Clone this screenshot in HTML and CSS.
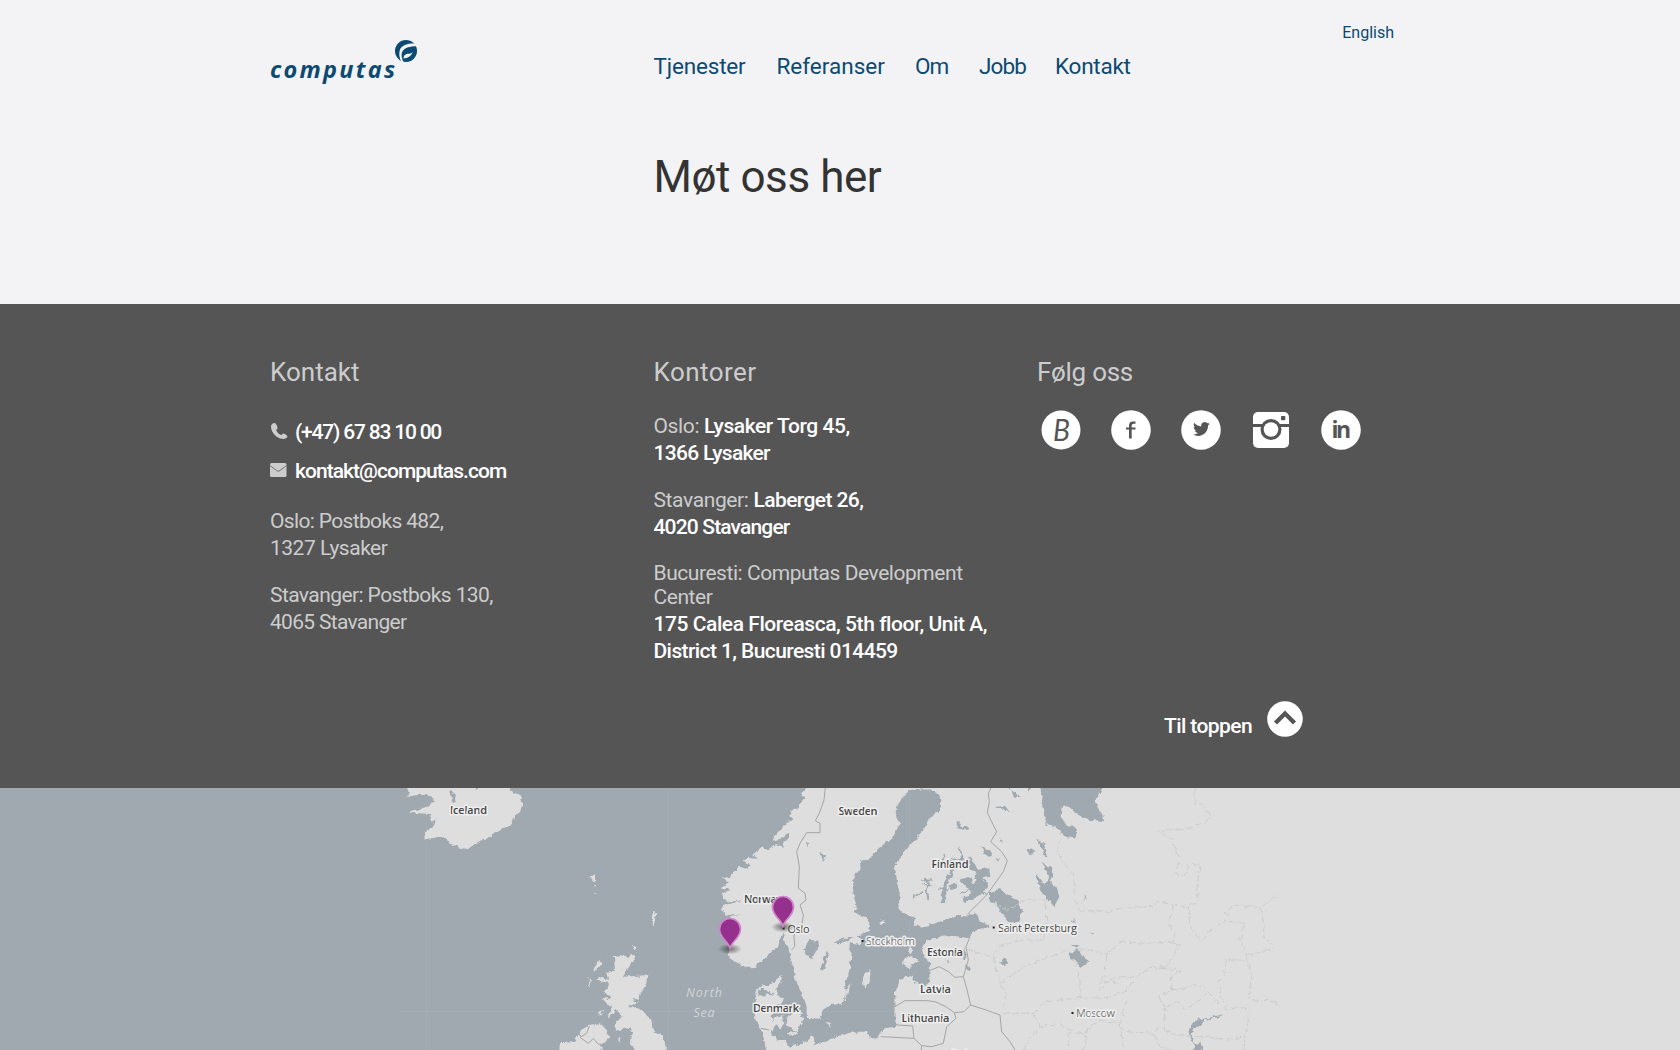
FILE: index.html
```html
<!DOCTYPE html>
<html lang="no">
<head>
<meta charset="utf-8">
<title>Møt oss her - Computas</title>
<link rel="stylesheet" href="styles.css">
</head>
<body>
<header class="header">
  <div class="wrap header-grid">
    <a class="logo" href="#" aria-label="Computas">
      <svg width="150" height="50" viewBox="0 0 150 50">
        <text class="logo-text" x="0" y="40.5" textLength="125">computas</text>
        <circle cx="136" cy="14" r="11" fill="#0b4a73"/>
        <path d="M147.500 7C139 5.500 131.500 8 129.800 13C128.800 17 129.200 21 131.500 25L133.500 25C131 20 131 15.500 133.500 13C137 9.500 142 9.500 148 9Z" fill="#f3f3f5"/>
        <path d="M133.500 21.500C133.500 18 136 16.500 139 16.700C140.500 16.800 141.500 16 142.500 15C142 18.500 138 21.500 133.500 21.500Z" fill="#f3f3f5"/>
      </svg>
    </a>
    <div class="main-head">
      <nav class="nav">
        <a class="n1" href="#">Tjenester</a><a class="n2" href="#">Referanser</a><a class="n3" href="#">Om</a><a class="n4" href="#">Jobb</a><a class="n5" href="#">Kontakt</a>
      </nav>
      <h1 class="title">Møt oss her</h1>
    </div>
    <a class="lang" href="#">English</a>
  </div>
</header>
<footer class="footer">
  <div class="wrap cols">
    <section>
      <h2>Kontakt</h2>
      <p class="line phone"><svg class="ico" width="18" height="18" viewBox="0 0 18 18"><path d="M4.500 1C3 1 1 2.500 1 4.500C1 11 7.500 17 13.500 17C15.500 17 17 16 17.500 14.500C17.500 13.500 15 12 13.500 11.500C12.500 11.500 12 13 11 13C9 12.500 7 10.500 6.300 8.300C6.300 7.500 7.500 7 7.500 6C7.500 4.500 6 1 4.500 1Z"/></svg><a href="#">(+47) 67 83 10 00</a></p>
      <p class="line mail"><svg class="ico" width="18" height="18" viewBox="0 0 18 18"><rect y="2" width="16.500" height="14" rx="1.500"/><path d="M0 4.500L6.500 9.500Q8.200 11 10 9.500L16.500 4.500" fill="none" stroke="#666" stroke-width=".9"/></svg><a href="#">kontakt@computas.com</a></p>
      <p class="addr"><span class="a1">Oslo: Postboks 482,</span><br><span class="a2">1327 Lysaker</span></p>
      <p class="addr"><span class="a3">Stavanger: Postboks 130,</span><br><span class="a4">4065 Stavanger</span></p>
    </section>
    <section class="offices">
      <h2>Kontorer</h2>
      <p class="addr"><span class="b0">Oslo: </span><a class="b1" href="#">Lysaker Torg 45,</a><br><a class="b5" href="#">1366 Lysaker</a></p>
      <p class="addr"><span class="b0">Stavanger: </span><a class="b2" href="#">Laberget 26,</a><br><a class="b6" href="#">4020 Stavanger</a></p>
      <p class="addr center-name">Bucuresti: Computas Development<br>Center</p>
      <p class="addr street"><a class="b3" href="#">175 Calea Floreasca, 5th floor, Unit A,</a><br><a class="b4" href="#">District 1, Bucuresti 014459</a></p>
    </section>
    <section class="follow">
      <h2>Følg oss</h2>
      <div class="social">
        <svg width="40" height="40" viewBox="0 0 40 40"><circle cx="20" cy="20" r="19.500"/><text class="glyph blog" x="12" y="31" textLength="17" lengthAdjust="spacingAndGlyphs">B</text></svg>
        <svg width="40" height="40" viewBox="0 0 40 40"><circle cx="20" cy="20" r="19.800"/><path class="cut" d="M18 28.500V19.500H15V17.500H18V15.500Q18 11.500 22 11.500H24.500V13.700H22.500Q20.700 13.700 20.700 15.500V17.500H24.500V19.500H20.700V28.500Z"/></svg>
        <svg width="40" height="40" viewBox="0 0 40 40"><circle cx="20" cy="20" r="19.800"/><path class="cut" transform="translate(12 12) scale(.7)" d="M24 2.600c-.9.400-1.800.7-2.800.8 1-.6 1.800-1.600 2.200-2.700-1 .6-2 1-3.100 1.200a4.900 4.900 0 0 0-8.400 4.500C7.700 6.200 4.100 4.200 1.700 1.200.4 3.400 1 6.300 3.200 7.800c-.8 0-1.600-.2-2.200-.6-.1 2.300 1.600 4.400 3.900 4.900-.7.200-1.500.2-2.200.1.600 2 2.400 3.400 4.600 3.400A9.900 9.900 0 0 1 0 17.600c9.100 5.800 21.700-.1 21.500-12.500 1-.7 1.800-1.600 2.500-2.500z"/></svg>
        <svg width="40" height="40" viewBox="0 0 40 40"><rect x="2" y="2" width="36" height="36" rx="5"/><path class="cut" d="M2 14H38V17H2z"/><circle class="cut" cx="20" cy="19.500" r="10.500"/><circle cx="20" cy="19.500" r="7.300"/><rect class="cut" x="30" y="6" width="4.300" height="4.300" rx=".8"/></svg>
        <svg width="40" height="40" viewBox="0 0 40 40"><circle cx="20" cy="20" r="19.800"/><text class="glyph in" x="10.500" y="27.500" textLength="19.500">in</text></svg>
      </div>
    </section>
  </div>
  <div class="wrap top-row">
    <a class="to-top" href="#"><span>Til toppen</span><svg width="36" height="36" viewBox="0 0 36 36"><circle cx="18" cy="18" r="17.800" fill="#fff"/><path d="M8.500 22L18 12.500L27.500 22" fill="none" stroke="#555" stroke-width="4.400"/></svg></a>
  </div>
</footer>
<div class="map">
<svg width="1680" height="262" viewBox="0 788 1680 262">
  <defs>
    <filter id="coast" filterUnits="userSpaceOnUse" x="-1950" y="0" width="5100" height="860" color-interpolation-filters="sRGB">
      <feTurbulence type="fractalNoise" baseFrequency=".07" numOctaves="3" seed="4"/>
      <feDisplacementMap in="SourceGraphic" scale="16" xChannelSelector="R" yChannelSelector="G"/>
    </filter>
    <radialGradient id="shade"><stop offset="0" stop-opacity=".5"/><stop offset="1" stop-opacity="0"/></radialGradient>
    <g id="pin"><ellipse cx="0" cy="1" rx="12" ry="5.500" fill="url(#shade)"/><path d="M0 0C-2-7-10.500-10-10.500-19A10.500 10.500 0 0 1 10.500-19C10.500-10 2-7 0 0Z" fill="#95308d" stroke="#cf86ca" stroke-width="1.700"/></g>
  </defs>
  <rect y="788" width="1680" height="262" fill="#9fa9af"/>
  <g transform="translate(640 780) scale(.333333)">
    <g class="land" filter="url(#coast)">
      <path d="M492 10L492 30 480 50 494 54 478 70 476 84 455 92 448 108 462 118 445 125 435 135 420 150 403 168 398 182 420 178 445 160 450 172 428 190 434 204 405 195 388 208 370 202 340 224 350 236 325 233 310 242 332 256 318 266 295 258 288 272 268 290 248 296 270 304 245 322 268 330 243 342 250 360 272 364 306 362 270 372 248 378 246 396 268 408 300 402 250 420 244 440 262 455 240 465 256 480 270 505 264 520 275 540 300 555 320 563 345 560 375 535 400 510 415 500 420 475 430 455 434 490 445 500 450 530 460 560 465 590 475 620 490 650 500 680 500 710 510 718 540 715 548 690 570 675 605 672 618 640 615 610 625 585 630 560 635 520 628 505 630 490 660 495 672 480 650 470 665 460 685 455 692 430 680 415 660 405 640 395 650 380 642 350 637 310 645 280 662 270 660 243 690 235 705 215 740 185 760 170 780 130 765 105 770 85 780 60 800 40 808 30 870 28 895 40 904 60 900 95 885 97 870 115 850 150 820 185 790 218 775 240 765 262 772 310 780 350 773 385 795 402 825 415 822 432 840 442 890 428 950 408 980 407 1010 400 1020 425 1055 437 1020 450 995 455 990 475 920 465 865 480 845 500 850 530 870 550 868 600 855 620 830 610 810 585 780 600 765 640 767 690 765 740 735 745 725 760 710 775 690 775 680 755 640 755 590 770 545 790 520 795 490 812 480 860 3150 860V10Z"/>
      <path d="M425 585L424 610 405 625 412 645 432 655 425 670 410 675 400 690 395 710 405 735 395 760 410 780 435 780 450 800 485 790 500 785 510 765 525 770 520 800 480 860H360L380 815 372 780 365 750 345 720 348 680 347 650 352 625 370 615 390 615Z"/>
      <path d="M402 712L425 705 433 728 422 745 402 735ZM438 718L455 700 485 695 488 725 475 735 478 755 458 748 440 735ZM440 760L465 755 475 762 450 770ZM558 725L572 730 572 742 560 735ZM675 578L695 570 692 600 672 625 668 600ZM632 608L625 645 612 665 620 630ZM790 538L820 526 835 540 805 565 790 555ZM800 508L815 503 824 515 808 520ZM718 430L732 418 736 430 722 435Z"/>
      <path d="M-705 10L-690 38 -703 50 -640 42 -615 62 -640 80 -690 98 -630 102 -625 125 -610 118 -620 140 -648 160 -646 178 -595 170 -570 190 -540 204 -515 207 -495 190 -455 175 -415 145 -385 135 -378 112 -360 95 -353 70 -358 45 -385 35 -400 10Z"/>
      <path d="M-78 530L-16 525 -20 545 -45 575 -50 590 25 585 22 610 0 640 -5 655 -25 660 -5 668 -35 682 -10 682 15 700 35 725 38 750 68 770 80 800 86 860 15 860 10 830 -30 790 -25 742 -75 752 -78 735 -55 710 -70 690 -98 715 -85 680 -115 660 -88 650 -107 638 -92 610 -130 600 -127 590 -92 600 -102 575 -75 572Z"/>
      <path d="M-240 860L-238 790 -195 785 -178 750 -150 735 -120 730 -100 750 -93 770 -115 795 -118 860ZM-140 570L-118 535 -117 555 -138 578ZM-154 590L-147 598 -152 622ZM-123 695L-110 690 -120 705ZM-63 780L-55 770 -60 790ZM-25 495L-10 505 -20 512ZM35 410L42 395 48 400 44 418 42 440 32 422ZM-150 292L-138 286 -130 300 -138 304ZM-140 315L-132 314 -132 320ZM-138 332L-130 342-137 340Z"/>
    </g>
    <g class="water" filter="url(#coast)">
      <path d="M510 480L535 482 537 500 515 535 495 522 490 508ZM560 515L566 525 550 575 540 570ZM538 215L558 225 550 245ZM500 185L508 190 505 200ZM580 488L620 470 645 473 620 484 600 490ZM-567 25L-557 40 -550 50 -560 70 -570 45ZM-495 20L-497 38 -485 25ZM360 625L382 632 405 645 380 640 372 650 355 645Z"/>
      <path d="M1195 10L1208 50 1205 70 1220 135 1245 140 1275 170 1305 175 1312 150 1300 138 1278 135 1262 108 1265 85 1280 75 1310 100 1325 110 1355 120 1390 122 1385 100 1365 60 1390 20ZM1100 20L1120 35 1140 50 1125 50ZM1065 82L1092 78 1112 95 1088 86ZM950 125L962 128 965 140 985 142 985 150 950 148ZM1160 20L1175 20 1165 38Z"/>
      <path d="M1050 340L1080 325 1100 345 1130 360 1145 395 1135 425 1110 428 1085 400 1070 370 1050 362ZM1205 250L1235 262 1240 280 1230 305 1250 325 1258 350 1242 380 1225 360 1200 330 1195 310 1190 280 1215 315 1225 290 1215 265ZM1190 180L1212 188 1215 205 1225 232 1215 230 1205 200ZM1160 210L1180 208 1182 220 1165 222ZM1075 175L1088 178 1085 188ZM1285 425L1300 418 1310 428ZM1332 342L1338 350 1335 362ZM1346 453L1365 465 1355 462ZM1285 515L1298 520 1310 508 1322 514 1328 528 1345 540 1338 553 1322 562 1308 545 1298 540ZM1292 494L1318 496 1310 504ZM1080 548L1095 535 1105 550 1090 556ZM970 500L978 520 975 540 970 540ZM978 555L992 565 985 572ZM920 540L928 545 925 555Z"/>
      <path d="M1020 198L1052 215 1052 235 1035 222ZM985 230L1005 250 1015 270 1045 262 1048 290 1025 295 1048 315 1030 340 995 360 970 365 968 348 995 345 985 325 960 298 990 290 1000 310 1010 300 1005 275 990 268ZM1070 235L1080 235 1072 248ZM905 370L905 320 920 295 935 270 955 250 940 275 920 315 918 368ZM925 320L945 308 952 325 935 330Z"/>
      <path d="M1752 702L1735 712 1695 720 1680 738 1660 742 1655 770 1665 800 1655 820 1690 810 1680 785 1672 798 1650 780 1645 750 1665 720 1700 715Z"/>
      <path fill="none" stroke="#9fa9af" stroke-width="5" d="M905 240L915 225M960 200L965 235 985 245M845 300L870 298 860 330 865 360M820 350L850 335M850 310L875 320M920 255L940 235 970 240M895 325L925 328M960 340L1000 325 1040 340"/>
    </g>
    <g class="borders">
      <path d="M556 20L552 60 538 100 526 122 540 130 540 158 500 158 480 190 470 215 478 260 475 325 495 340 498 360 480 375 490 405 485 440 462 465 464 500 455 510M1055 20L1045 40 1048 65 1042 98 1055 125 1070 155 1052 185 1085 215 1102 242 1090 275 1040 345 982 403M990 470L978 500 985 540 970 590 945 592 925 575 898 560 868 572M970 590L980 625 992 675 972 695 943 698 918 680 885 665 860 662 795 662 765 680M992 675L1038 690 1080 705 1085 755 1110 785 1128 815M943 698L948 715 920 740 910 790 875 800 845 797 843 815M770 735L818 738 822 775 722 770M822 775L845 797M362 745L388 750M-152 738L-160 760 -180 772 -155 790 -140 775 -125 793 -115 792"/>
    </g>
    <g class="regions" filter="url(#coast)">
      <path d="M1665 25V70L1685 72 1712 108 1700 125 1645 145 1550 152 1595 180 1618 235 1607 280 1620 290 1640 280 1645 250 1680 252 1670 330 1676 360 1645 380 1600 375 1555 365 1545 378 1440 385 1400 395 1320 390 1305 355 1300 280 1265 240 1250 210 1262 175M1600 375L1585 430 1605 460 1600 485 1520 490 1440 485 1400 525 1350 510 1320 510M1605 485L1617 500 1580 560 1530 562 1480 600 1460 630 1400 655 1320 652 1220 665 1180 700 1090 700M1645 380L1650 440 1685 485 1710 450 1755 425 1770 420 1757 400 1780 375 1860 382 1918 340M1860 382L1875 440 1870 470 1898 495 1898 505 1850 522 1818 522 1800 480 1815 430 1770 425M1818 522L1835 590 1825 650 1850 665 1885 660 1920 675M1818 540L1760 540 1750 590 1735 605 1745 660 1760 690 1800 680 1830 690 1820 740 1810 815M1735 670L1690 620 1660 615 1620 630 1595 628 1560 650 1575 690 1570 735 1590 760 1640 770 1700 770 1760 780 1815 770"/>
      <path d="M975 505L1020 520 1060 530 1080 500 1150 480 1210 480 1220 420 1215 360 1160 360 1100 390 1038 358M1060 530L1080 610 1098 640 1090 690M1080 610L1150 560 1230 530 1285 510M1300 540L1320 600 1320 650M1440 610L1400 605 1370 640M1400 525L1395 580 1380 610 1440 590 1490 590M1530 562L1620 570 1595 590 1595 628M1460 660L1440 730 1380 720 1340 750 1330 815M1440 730L1450 800M1460 755L1540 760 1560 740 1590 755M1180 700L1200 740 1170 775 1150 815M1200 740L1260 730 1290 750 1340 770M1540 760L1560 800 1600 810M1575 680L1610 665 1640 690 1700 640M1290 750L1280 815"/>
    </g>
  </g>
  <path d="M426.500 788V1050M668.500 788V1050M909.500 788V1050M400 1011.500H1280" stroke="#fff" opacity=".05"/>
  <g class="labels">
    <text x="450" y="813.500" textLength="37">Iceland</text><text x="838.500" y="814.500" textLength="39">Sweden</text><text x="744" y="903" textLength="38">Norway</text><text x="931.500" y="868" textLength="37">Finland</text><text x="927" y="956" textLength="36">Estonia</text><text x="920" y="993" textLength="31">Latvia</text><text x="901.500" y="1021.500" textLength="48">Lithuania</text><text x="753" y="1012" textLength="46">Denmark</text><text x="951" y="1058">Belarus</text>
    <text class="city" x="787.500" y="932.500" textLength="22">Oslo</text><text class="city" x="998" y="932" textLength="79">Saint Petersburg</text><text class="city pale" x="866" y="945" textLength="49">Stockholm</text><text class="city pale" x="1076" y="1016.500" textLength="39">Moscow</text>
    <text class="sea" x="686" y="997" textLength="36">North</text><text class="sea" x="693.500" y="1017" textLength="21">Sea</text>
  </g>
  <path d="M782.500 927.500h2v2h-2zM861.500 940h2v2h-2zM992.700 926.500h2v2h-2zM1071.500 1012h2v2h-2z" fill="#222"/>
  <use href="#pin" x="783" y="926"/><use href="#pin" x="730" y="948"/>
</svg>
</div>
</body>
</html>
```
FILE: styles.css
```css
* { box-sizing: border-box; }
body { margin: 0; font-family: Roboto, "Liberation Sans", sans-serif; background: #f3f3f5; overflow: hidden; }
a { color: inherit; text-decoration: none; }
h1, h2, p { margin: 0; font-weight: 400; }
svg { display: block; }
.wrap { width: 1140px; margin: 0 auto; }
.header { height: 304px; }
.header-grid { display: grid; grid-template-columns: 383.500px 1fr auto; padding-right: 16px; }
.logo { padding-top: 37px; }
.logo-text { font: italic 700 23.500px "Open Sans", sans-serif; fill: #0b4a73; }
.main-head { padding-top: 53px; }
.nav { display: flex; font-size: 22.500px; line-height: 27px; color: #0b4a73; white-space: nowrap; }
.nav a { flex: none; }
.n1 { width: 123px; letter-spacing: -.18px; }
.n2 { width: 138.500px; }
.n3 { width: 64px; letter-spacing: -1px; }
.n4 { width: 76px; letter-spacing: -.9px; }
.n5 { letter-spacing: -.25px; }
.title { margin-top: 71px; font-size: 44px; line-height: 52px; letter-spacing: -.43px; color: #333; white-space: nowrap; }
.lang { padding-top: 23px; font-size: 16px; line-height: 20px; color: #0b4a73; }
.footer { height: 484px; padding-top: 53px; background: #555; color: #ccc; }
.cols { display: grid; grid-template-columns: 383.500px 383.500px 1fr; height: 342px; font-size: 21px; line-height: 27px; white-space: nowrap; }
.cols a, .to-top { color: #fff; }
h2 { font-size: 26px; line-height: 30px; }
.line { display: flex; }
.line a { font-weight: 500; }
.ico { flex: none; width: 18px; margin: 3px 7px 0 0; fill: #ccc; }
.phone { margin-top: 32px; letter-spacing: -1.2px; }
.mail { margin-top: 12px; margin-bottom: 23px; letter-spacing: -.96px; }
.addr + .addr { margin-top: 20px; }
.a1 { letter-spacing: -.65px; }
.a2 { letter-spacing: -.49px; }
.a3 { letter-spacing: -.58px; }
.a4 { letter-spacing: -.69px; }
.b0 { letter-spacing: -.37px; }
.b1 { letter-spacing: -.43px; }
.b2 { letter-spacing: -.58px; }
.b3 { letter-spacing: -.44px; }
.b4 { letter-spacing: -.59px; }
.b5 { letter-spacing: -.71px; }
.b6 { letter-spacing: -.84px; }
.offices h2 { margin-bottom: 26px; letter-spacing: .45px; }
.offices a { font-weight: 500; }
.offices .center-name { line-height: 24px; letter-spacing: -.45px; }
.offices .street { margin-top: 2px; }
.follow h2 { letter-spacing: -.27px; }
.social { display: flex; gap: 30px; margin: 23px 0 0 3.500px; }
.social svg { flex: none; fill: #fff; }
.social .cut, .social .glyph { fill: #555; }
.blog { font: italic 400 30px Lato, sans-serif; }
.in { font: 700 23px "Open Sans", sans-serif; }
.top-row { display: flex; justify-content: flex-end; padding-right: 107px; }
.to-top { display: flex; gap: 15px; padding-top: 2px; font-size: 21px; line-height: 27px; letter-spacing: -.59px; }
.to-top span { padding-top: 12px; font-weight: 500; }
.map { height: 262px; }
.land { fill: #dedede; }
.water { fill: #9fa9af; }
.borders { fill: none; stroke: #a5a5a5; stroke-width: 3; stroke-linejoin: round; }
.regions { fill: none; stroke: #c9c9c9; stroke-width: 2.500; stroke-dasharray: 22 7; stroke-linejoin: round; }
.labels { font: 600 11px "Open Sans", sans-serif; fill: #444; stroke: #eee; stroke-width: 3px; stroke-linejoin: round; paint-order: stroke; }
.city { font-weight: 400; }
.pale { fill: #777; }
.sea { font-size: 12.500px; font-style: italic; font-weight: 400; fill: #d0d5d8; stroke: none; }
```
